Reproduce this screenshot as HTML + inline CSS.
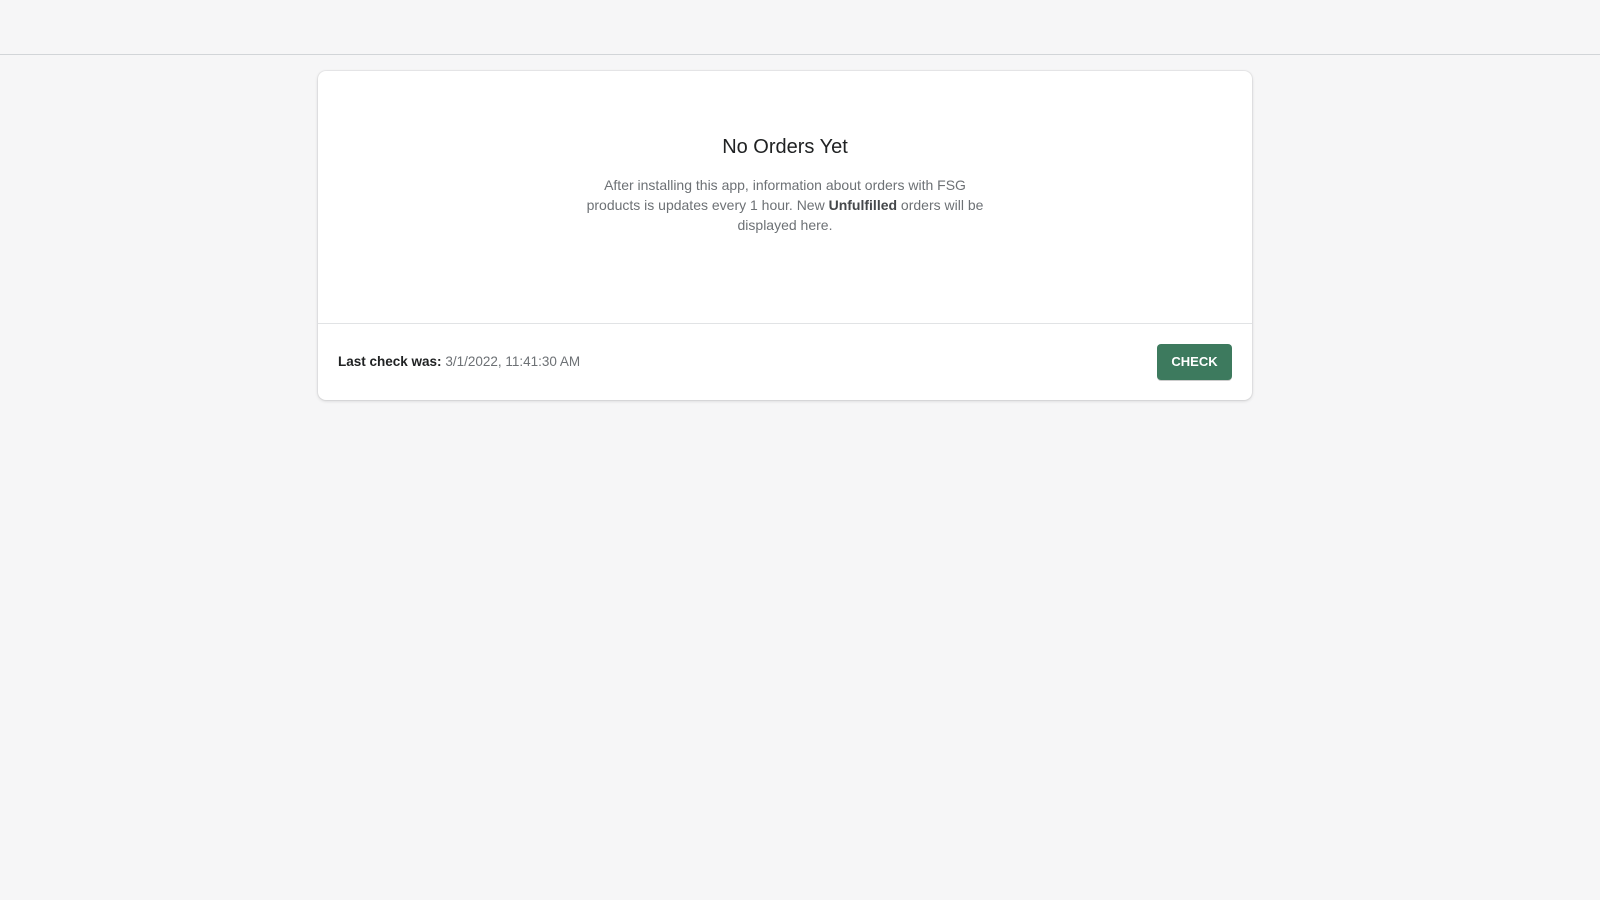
<!DOCTYPE html>
<html><head><style>
body{margin:0;width:1600px;height:900px;background:#f6f6f7;font-family:"Liberation Sans",sans-serif;position:relative;overflow:hidden}
.top{position:absolute;left:0;top:0;width:1600px;height:54px;border-bottom:1px solid #d2d5d8;background:#f6f6f7}
.card{position:absolute;left:318px;top:71px;width:934px;height:329px;background:#fff;border-radius:8px;box-shadow:0 0 0 1px rgba(63,63,68,.05),0 1px 3px rgba(63,63,68,.2)}
.title{position:absolute;width:100%;text-align:center;font-size:20px;color:#202223}
.desc{position:absolute;left:50%;transform:translateX(-50%);width:410px;text-align:center;font-size:14px;line-height:20px;color:#6d7175}
.desc b{color:#44474a}
.div{position:absolute;top:252px;left:0;right:0;border-top:1px solid #e1e3e5}
.last{position:absolute;top:283px;left:20px;font-size:13.5px;color:#6d7175}
.last b{color:#202223}
.btn{position:absolute;left:839px;top:273px;width:75px;height:36px;background:#3d7a5e;border-radius:4px;color:#fff;font-weight:bold;font-size:13px;line-height:36px;text-align:center;box-shadow:0 1px 0 rgba(0,0,0,.2)}
</style></head><body>
<div class="top"></div>
<div class="card">
<div class="title" style="top:65px">No Orders Yet</div>
<div class="desc" style="top:104px">After installing this app, information about orders with FSG products is updates every 1 hour. New <b>Unfulfilled</b> orders will be displayed here.</div>
<div class="div"></div>
<div class="last"><b>Last check was:</b> 3/1/2022, 11:41:30 AM</div>
<div class="btn">CHECK</div>
</div>
</body></html>
